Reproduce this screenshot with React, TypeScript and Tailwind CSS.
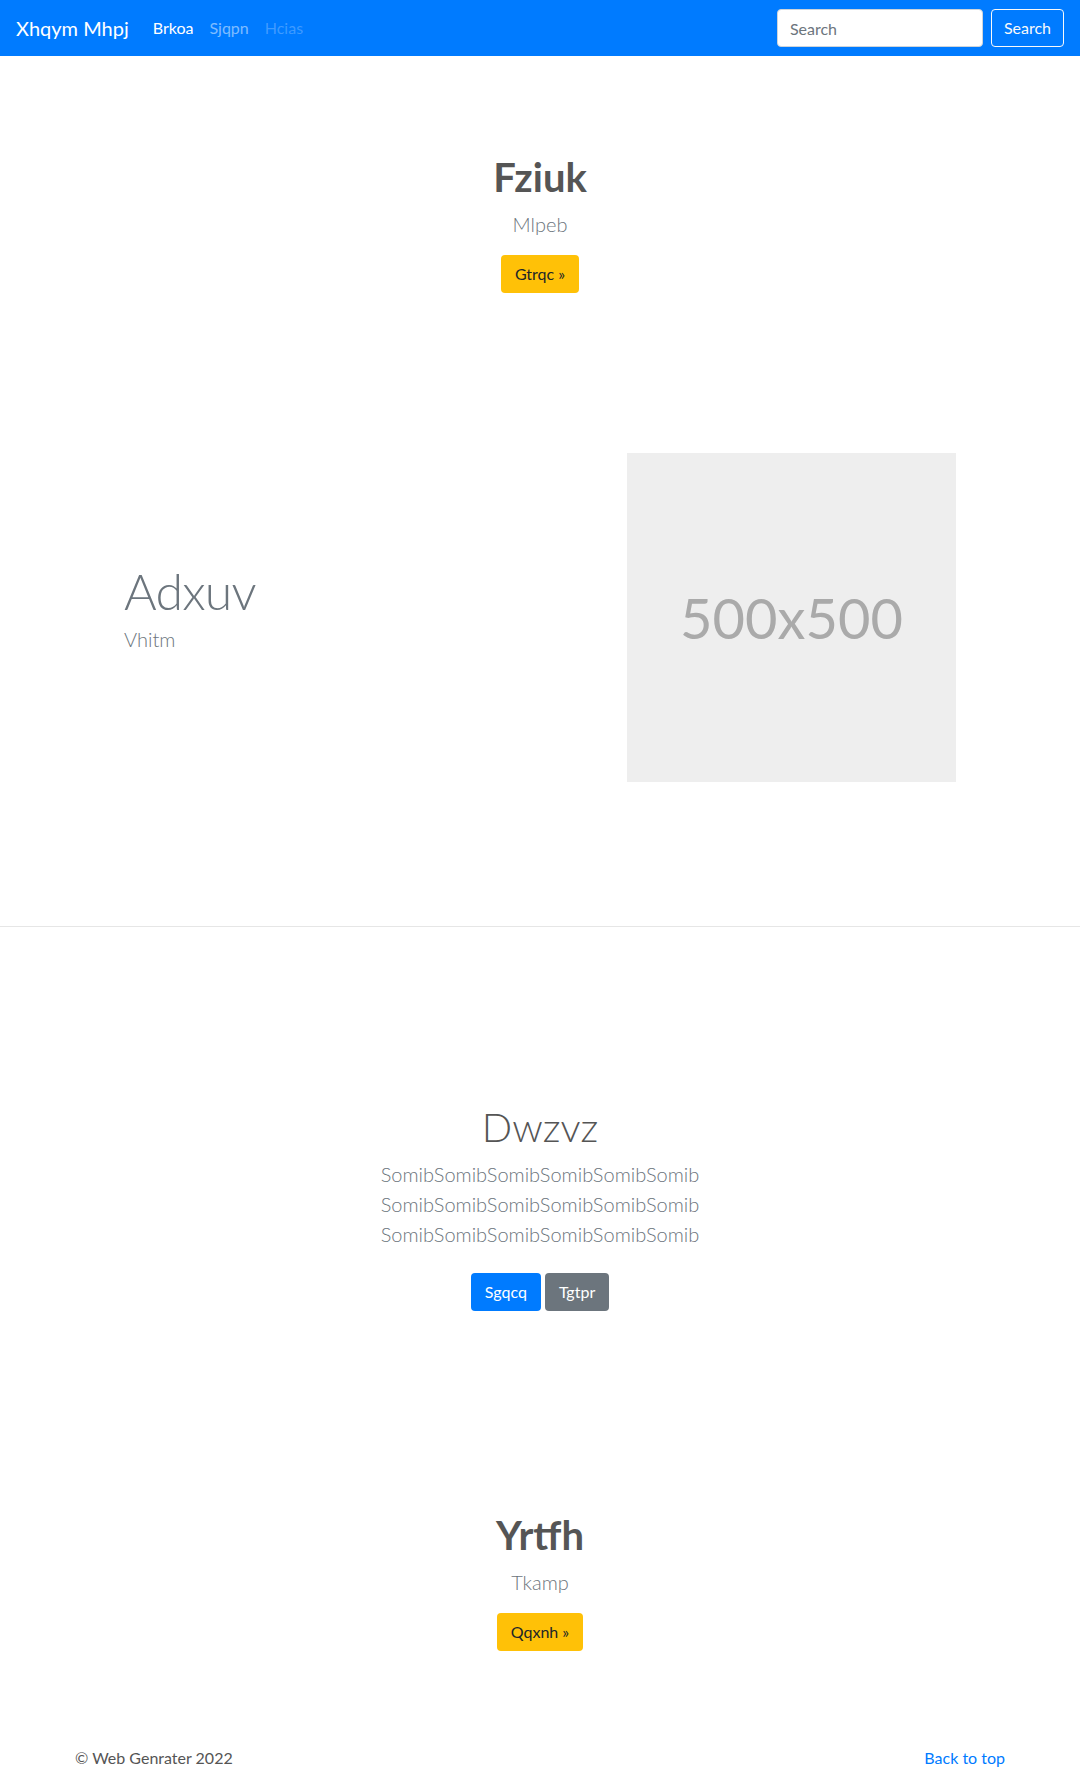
import React from "react";

export default function App() {
  const somib = "SomibSomibSomibSomibSomibSomib";
  return (
    <div className="w-[1080px] min-h-[1770px] bg-white font-['Lato','Open_Sans',sans-serif] text-[#212529]">
      {/* Navbar */}
      <nav className="h-[56px] bg-[#007bff] flex items-center px-4">
        <span className="text-[20px] leading-[30px] text-white mr-4">Xhqym Mhpj</span>
        <div className="flex items-center text-[16px]">
          <span className="px-2 text-white">Brkoa</span>
          <span className="px-2 text-white/50">Sjqpn</span>
          <span className="px-2 text-white/25">Hcias</span>
        </div>
        <div className="ml-auto flex items-center gap-2">
          <input
            type="text"
            placeholder="Search"
            className="w-[206px] h-[38px] rounded bg-white border border-[#ced4da] px-3 text-[16px] text-[#495057] placeholder:text-[#6c757d] outline-none"
          />
          <button className="h-[38px] px-3 rounded border border-[#f8f9fa] text-[#f8f9fa] text-[16px]">
            Search
          </button>
        </div>
      </nav>

      {/* Section 1 */}
      <section className="pt-[97px] pb-[160px] text-center">
        <h1 className="text-[40px] leading-[48px] font-bold text-[#555] mb-2">Fziuk</h1>
        <p className="text-[20px] leading-[30px] font-light text-[#6c757d] mb-4">Mlpeb</p>
        <button className="h-[38px] px-[14px] rounded bg-[#ffc107] text-[#212529] text-[16px]">Gtrqc »</button>
      </section>

      {/* Section 2 */}
      <section className="flex items-center pl-[124px] pr-[124px] pb-[144px]">
        <div className="flex-1">
          <h2 className="text-[50px] leading-[50px] font-light tracking-[-0.8px] text-[#6c757d] mb-2">Adxuv</h2>
          <p className="text-[20px] leading-[30px] font-light text-[#6c757d] mb-4">Vhitm</p>
        </div>
        <div className="w-[329px] h-[329px] bg-[#eeeeee] flex items-center justify-center">
          <span className="text-[56px] text-[#aaaaaa]">500x500</span>
        </div>
      </section>

      <hr className="border-0 border-t border-[#e6e6e6]" />

      {/* Section 3 */}
      <section className="pt-[176px] pb-[176px] text-center">
        <h1 className="text-[40px] leading-[48px] font-light text-[#555] mb-2">Dwzvz</h1>
        <p className="text-[20px] leading-[30px] font-light text-[#6c757d] mb-4">
          {somib}
          <br />
          {somib}
          <br />
          {somib}
        </p>
        <div className="flex justify-center gap-1 py-2 mb-4">
          <button className="h-[38px] px-[14px] rounded bg-[#007bff] text-white text-[16px]">Sgqcq</button>
          <button className="h-[38px] px-[14px] rounded bg-[#6c757d] text-white text-[16px]">Tgtpr</button>
        </div>
      </section>

      {/* Section 4 */}
      <section className="pb-[95px] text-center">
        <h1 className="text-[40px] leading-[48px] font-bold text-[#555] mb-2">Yrtfh</h1>
        <p className="text-[20px] leading-[30px] font-light text-[#6c757d] mb-4">Tkamp</p>
        <button className="h-[38px] px-[14px] rounded bg-[#ffc107] text-[#212529] text-[16px]">Qqxnh »</button>
      </section>

      {/* Footer */}
      <footer className="px-[75px] flex justify-between text-[16px] leading-[24px]">
        <p className="text-[#555]">© Web Genrater 2022</p>
        <p className="text-[#007bff]">Back to top</p>
      </footer>
    </div>
  );
}
